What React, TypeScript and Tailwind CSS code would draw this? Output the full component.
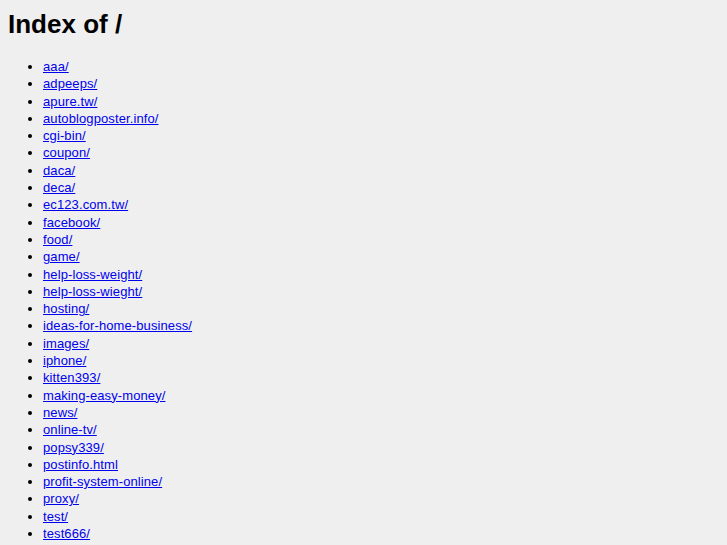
const entries = [
  'aaa/',
  'adpeeps/',
  'apure.tw/',
  'autoblogposter.info/',
  'cgi-bin/',
  'coupon/',
  'daca/',
  'deca/',
  'ec123.com.tw/',
  'facebook/',
  'food/',
  'game/',
  'help-loss-weight/',
  'help-loss-wieght/',
  'hosting/',
  'ideas-for-home-business/',
  'images/',
  'iphone/',
  'kitten393/',
  'making-easy-money/',
  'news/',
  'online-tv/',
  'popsy339/',
  'postinfo.html',
  'profit-system-online/',
  'proxy/',
  'test/',
  'test666/',
];

export default function App() {
  return (
    <div className="min-h-screen bg-[#efefef] px-2 text-black [font-family:'Liberation_Sans',Arial,sans-serif]">
      <h1 className="pt-[9px] text-[26px] font-bold leading-[30px]">Index of /</h1>
      <ul className="mt-[19px] list-disc pl-[35px] text-[13px] leading-[17.3px] tracking-[0.1px]">
        {entries.map((name) => (
          <li key={name}>
            <a href={name} className="text-[#0000ee] underline">
              {name}
            </a>
          </li>
        ))}
      </ul>
    </div>
  );
}
